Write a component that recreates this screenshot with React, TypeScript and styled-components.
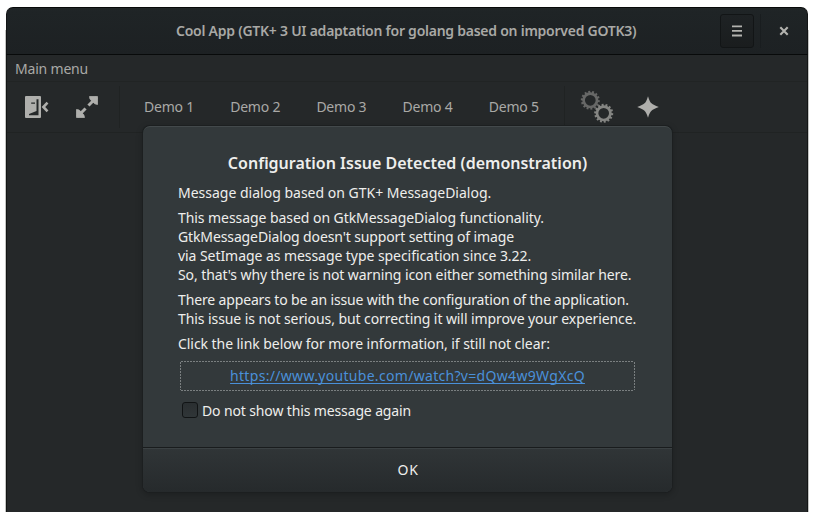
import React from 'react';
import styled, { createGlobalStyle } from 'styled-components';

const Global = createGlobalStyle`
  * { box-sizing: border-box; }
  body {
    margin: 0;
    background: #fff;
    overflow: hidden;
    font: 14px/19px "Noto Sans", "Open Sans", sans-serif;
    color: #a9a9a6;
    font-kerning: normal;
  }
`;

const Page = styled.div`
  height: 512px;
  padding: 7px 6px 0;
  display: flex;
`;

const Window = styled.div`
  position: relative;
  width: 802px;
  display: flex;
  flex-direction: column;
  isolation: isolate;
  &::before {
    content: '';
    position: absolute;
    z-index: -1;
    inset: 23px -1px 0 -1px;
    background: #c4c5c3;
  }
`;

const HeaderBar = styled.header`
  height: 48px;
  display: flex;
  align-items: center;
  border: 1px solid #080a0a;
  border-left-color: #121415;
  border-right-color: #121415;
  border-radius: 7px 7px 0 0;
  background: linear-gradient(#212628, #1f2426 3px, #1d2123);
`;

const Title = styled.h1`
  margin: 0 0 0 169px;
  padding-bottom: 2px;
  width: 544px;
  font-size: 14px;
  line-height: 19px;
  font-weight: 600;
  letter-spacing: -0.25px;
  white-space: nowrap;
`;

const IconButton = styled.button<{ $raised?: boolean }>`
  display: grid;
  place-items: center;
  width: 34px;
  height: 34px;
  padding: 0;
  color: #b3b3af;
  border-radius: 3px;
  border: 1px solid ${p => (p.$raised ? '#121516' : 'transparent')};
  background: ${p => (p.$raised ? 'linear-gradient(#1e2224, #1a1d1e)' : 'none')};
`;

const HeaderDivider = styled.div`
  width: 1px;
  height: 34px;
  margin: 0 6px;
  background: #191d1f;
`;

const Content = styled.main`
  flex: 1;
  display: flex;
  flex-direction: column;
  border: solid #131515;
  border-width: 0 1px;
  background: #252829;
`;

const MenuBar = styled.nav`
  height: 27px;
  padding: 4px 8px;
  letter-spacing: -0.19px;
  border-bottom: 1px solid #212424;
`;

const Toolbar = styled.div`
  height: 51px;
  display: flex;
  align-items: center;
  padding-left: 18px;
  border-bottom: 1px solid #202323;
`;

const ToolIcon = styled.span<{ $gap: number }>`
  display: flex;
  margin-right: ${p => p.$gap}px;
  color: #afafac;
`;

const ToolDivider = styled.div`
  width: 1px;
  height: 42px;
  background: #202323;
`;

const ToolLabels = styled.div`
  display: flex;
  padding: 0 0 2px 24px;
  width: 444px;
`;

const ToolLabel = styled.span`
  flex: 0 0 86.2px;
  letter-spacing: -0.22px;
`;

const ToolGroup = styled.div`
  display: flex;
  align-items: center;
  padding-left: 15px;
`;

const Dialog = styled.section`
  position: absolute;
  left: 137px;
  top: 119px;
  width: 529px;
  height: 366px;
  display: flex;
  flex-direction: column;
  overflow: hidden;
  border-radius: 7px;
  color: #eeeeec;
  background: #33393b;
  box-shadow: 0 0 0 1px #1c1f20, 0 2px 6px 1px rgba(0, 0, 0, 0.22);
`;

const DialogBody = styled.div`
  height: 321px;
  padding: 26px 36px 0 35px;
  border-top: 1px solid #43494b;
  border-radius: 7px 7px 0 0;
`;

const DialogTitle = styled.h2`
  margin: 0 0 9px 1px;
  font-size: 16px;
  line-height: 21px;
  font-weight: 600;
  text-align: center;
  white-space: nowrap;
`;

const Paragraph = styled.p`
  margin: 0 0 6px;
`;

const Line = styled.span<{ $track?: number }>`
  display: block;
  white-space: nowrap;
  letter-spacing: ${p => p.$track ?? 0}px;
`;

const LinkFrame = styled.div`
  --across: repeating-linear-gradient(90deg, #7a7f80 0 2px, transparent 2px 3px);
  --down: repeating-linear-gradient(#7a7f80 0 2px, transparent 2px 3px);
  display: flex;
  justify-content: center;
  width: 455px;
  height: 30px;
  margin: 8px 0 0 2px;
  padding-top: 5px;
  background:
    var(--across) 1px 0 / 453px 1px no-repeat,
    var(--across) 1px 100% / 453px 1px no-repeat,
    var(--down) 0 1px / 1px 28px no-repeat,
    var(--down) 100% 1px / 1px 28px no-repeat;
`;

const Link = styled.a`
  color: #4a90d9;
  letter-spacing: 0.31px;
  text-decoration: underline 1px;
  text-underline-offset: 2px;
  text-decoration-skip-ink: none;
`;

const CheckRow = styled.label`
  display: flex;
  align-items: center;
  gap: 4px;
  height: 19px;
  margin: 10px 0 0 4px;
  letter-spacing: -0.13px;
`;

const CheckBox = styled.span`
  width: 16px;
  height: 16px;
  margin-top: -1px;
  border: 1px solid #111415;
  border-radius: 3px;
  background: linear-gradient(#2a2f31, #303638);
`;

const OkButton = styled.button`
  flex: 1;
  padding: 0 0 1px 1px;
  border: 0;
  border-top: 1px solid #191c1d;
  box-shadow: inset 0 1px #3b4143;
  background: linear-gradient(#303537, #262a2c);
  font: inherit;
  letter-spacing: 0.7px;
  color: inherit;
`;

const teeth = (cx: number, cy: number) =>
  Array.from({ length: 14 }, (_, i) => {
    const a = (i * Math.PI * 2) / 14 + 0.1;
    const x = Math.cos(a);
    const y = Math.sin(a);
    return `M${cx + x * 7.2} ${cy + y * 7.2}L${cx + x * 9.5} ${cy + y * 9.5}`;
  }).join('');

const Gear = ({ cx, cy, color }: { cx: number; cy: number; color: string }) => (
  <g stroke={color} fill="none">
    <circle cx={cx} cy={cy} r="6.7" strokeWidth="2.7" />
    <path d={teeth(cx, cy)} strokeWidth="2" />
  </g>
);

const DoorIcon = () => (
  <svg width="24" height="22" viewBox="0 0 24 22" fill="currentColor">
    <path fillRule="evenodd" d="M1 0H15Q16 0 16 1V21Q16 22 15 22H1Q0 22 0 21V1Q0 0 1 0ZM11.5 3.2V15L4 18V19.2H13.5V3.2ZM6.2 6.5V7.7H10V6.5Z" />
    <path d="M22.5 6.7L18.4 11L22.5 15.3" fill="none" stroke="currentColor" strokeWidth="2.6" />
  </svg>
);

const ExpandIcon = () => (
  <svg width="22" height="22" viewBox="0 0 22 22" fill="none" stroke="currentColor" strokeWidth="3">
    <path d="M13.5 8.5L19.5 2.5M8.5 13.5L2.5 19.5" strokeLinecap="square" />
    <path d="M13.5 0.5H21.5V8.5L18.8 7.8L14 3.2ZM0.5 13.5V21.5H8.5L7.8 18.8L3.2 14Z" fill="currentColor" strokeWidth=".8" strokeLinejoin="round" />
  </svg>
);

const GearsIcon = () => (
  <svg width="34" height="34" viewBox="0 0 34 34">
    <Gear cx={10.3} cy={10.3} color="#676867" />
    <Gear cx={23.7} cy={23.3} color="#858683" />
  </svg>
);

const StarIcon = () => (
  <svg width="22" height="22" viewBox="0 0 22 22" fill="currentColor">
    <path d="M11 .2C12.2 4.5 13.5 6.8 14.8 7.6C15.8 8.5 18 9.6 21.8 11C18 12.4 15.8 13.5 14.8 14.4C13.5 15.2 12.2 17.5 11 21.8C9.8 17.5 8.5 15.2 7.2 14.4C6.2 13.5 4 12.4 .2 11C4 9.6 6.2 8.5 7.2 7.6C8.5 6.8 9.8 4.5 11 .2Z" />
  </svg>
);

const MenuIcon = () => (
  <svg width="10" height="12" viewBox="0 0 10 12" fill="currentColor">
    <path d="M0 .4H10V2.2H0ZM0 5H10V6.8H0ZM0 9.6H10V11.4H0Z" />
  </svg>
);

const CloseIcon = () => (
  <svg width="10" height="10" viewBox="0 0 10 10" stroke="currentColor" strokeWidth="2.1">
    <path d="M1.3 1.3L8.7 8.7M8.7 1.3L1.3 8.7" />
  </svg>
);

const demos = [1, 2, 3, 4, 5];

export default function App() {
  return (
    <Page>
      <Global />
      <Window>
        <HeaderBar>
          <Title>Cool App (GTK+ 3 UI adaptation for golang based on imporved GOTK3)</Title>
          <IconButton $raised aria-label="Menu"><MenuIcon /></IconButton>
          <HeaderDivider />
          <IconButton aria-label="Close"><CloseIcon /></IconButton>
        </HeaderBar>
        <Content>
          <MenuBar>Main menu</MenuBar>
          <Toolbar>
            <ToolIcon $gap={27}><DoorIcon /></ToolIcon>
            <ToolIcon $gap={21}><ExpandIcon /></ToolIcon>
            <ToolDivider />
            <ToolLabels>
              {demos.map(n => <ToolLabel key={n}>Demo {n}</ToolLabel>)}
            </ToolLabels>
            <ToolDivider />
            <ToolGroup>
              <ToolIcon $gap={23}><GearsIcon /></ToolIcon>
              <ToolIcon $gap={0}><StarIcon /></ToolIcon>
            </ToolGroup>
          </Toolbar>
        </Content>
        <Dialog role="dialog">
          <DialogBody>
            <DialogTitle>Configuration Issue Detected (demonstration)</DialogTitle>
            <Paragraph>
              <Line>Message dialog based on GTK+ MessageDialog.</Line>
            </Paragraph>
            <Paragraph>
              <Line $track={-0.06}>This message based on GtkMessageDialog functionality.</Line>
              <Line $track={-0.12}>GtkMessageDialog doesn't support setting of image</Line>
              <Line $track={-0.06}>via SetImage as message type specification since 3.22.</Line>
              <Line $track={-0.09}>So, that's why there is not warning icon either something similar here.</Line>
            </Paragraph>
            <Paragraph>
              <Line $track={-0.145}>There appears to be an issue with the configuration of the application.</Line>
              <Line $track={-0.08}>This issue is not serious, but correcting it will improve your experience.</Line>
            </Paragraph>
            <Line $track={-0.06}>Click the link below for more information, if still not clear:</Line>
            <LinkFrame>
              <Link>https://www.youtube.com/watch?v=dQw4w9WgXcQ</Link>
            </LinkFrame>
            <CheckRow>
              <CheckBox />
              Do not show this message again
            </CheckRow>
          </DialogBody>
          <OkButton>OK</OkButton>
        </Dialog>
      </Window>
    </Page>
  );
}
